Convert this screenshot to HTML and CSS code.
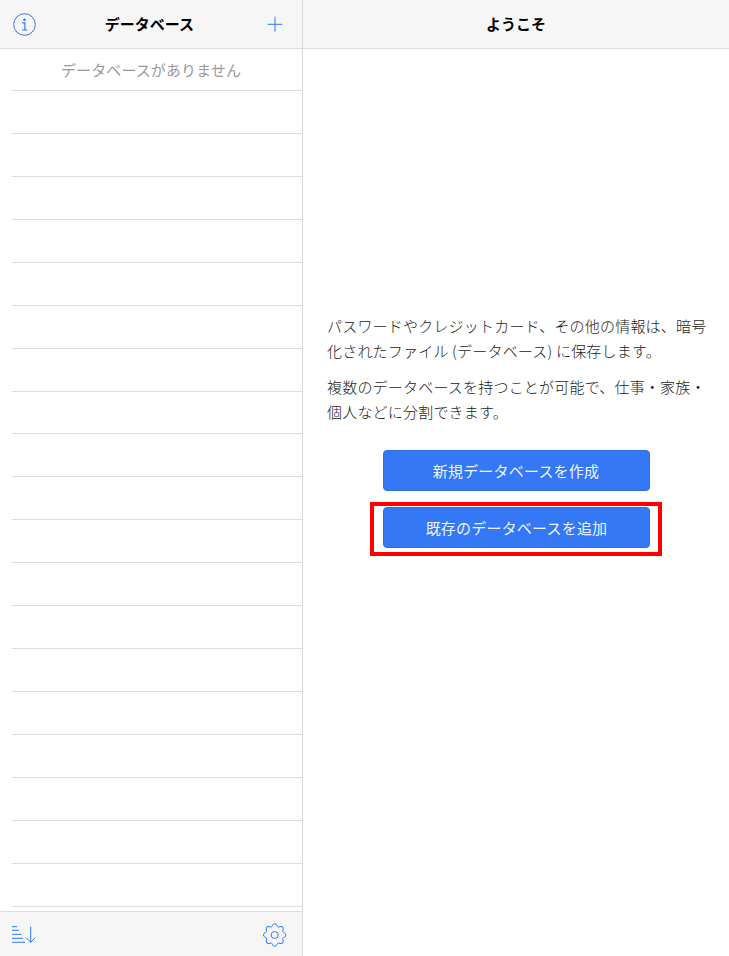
FILE: index.html
```html
<!DOCTYPE html>
<html lang="ja">
<head>
    <meta charset="UTF-8">
    <meta name="viewport" content="width=device-width, initial-scale=1.0">
    <title>データベース</title>
    <link rel="stylesheet" href="styles.css">
</head>
<body>
    <div class="app">
        <!-- database list -->
        <div class="sidebar">
            <div class="navbar navbar-split">
                <svg class="icon" width="24" height="24" viewBox="0 0 24 24">
                    <circle cx="12.500" cy="12.500" r="10.800"/>
                    <circle class="dot" cx="12.500" cy="7.800" r="1.300"/>
                    <path class="thick" d="M10.300 10.800h2.600v7M10 18h5.400"/>
                </svg>
                <span class="navbar-title">データベース</span>
                <svg class="icon" width="24" height="24" viewBox="0 0 24 24">
                    <path d="M12 4.700v15M4.700 12.300h14.600"/>
                </svg>
            </div>
            <ul class="db-list">
                <li class="db-empty">データベースがありません</li>
                <li></li><li></li><li></li><li></li><li></li>
                <li></li><li></li><li></li><li></li><li></li>
                <li></li><li></li><li></li><li></li><li></li>
                <li></li><li></li><li></li><li></li>
            </ul>
            <div class="toolbar">
                <svg class="icon" width="26" height="20" viewBox="0 0 26 20">
                    <path d="M0 2.700h5M0 6.300h7M0 10.300h9.500M0 14.300h11M0 18.300h13"/>
                    <path d="M18.700 2.700v15.600M14.200 13.700l4.500 4.600 4.500-4.600"/>
                </svg>
                <svg class="icon icon-gear" width="24" height="24" viewBox="0 0 24 24">
                    <defs>
                        <path id="gear-lobe" d="M8.670 3.960C9.900 3.400 9.600 .8 12 .8S14.100 3.400 15.330 3.960"/>
                    </defs>
                    <g transform="translate(-.3 1)">
                        <circle cx="12" cy="12" r="3.500"/>
                        <use href="#gear-lobe"/>
                        <use href="#gear-lobe" transform="rotate(45 12 12)"/>
                        <use href="#gear-lobe" transform="rotate(90 12 12)"/>
                        <use href="#gear-lobe" transform="rotate(135 12 12)"/>
                        <use href="#gear-lobe" transform="rotate(180 12 12)"/>
                        <use href="#gear-lobe" transform="rotate(225 12 12)"/>
                        <use href="#gear-lobe" transform="rotate(270 12 12)"/>
                        <use href="#gear-lobe" transform="rotate(315 12 12)"/>
                    </g>
                </svg>
            </div>
        </div>

        <!-- welcome -->
        <div class="main">
            <div class="navbar">
                <span class="navbar-title">ようこそ</span>
            </div>
            <div class="welcome">
                <p>パスワードやクレジットカード、その他の情報は、暗号化されたファイル (データベース) に保存します。</p>
                <p>複数のデータベースを持つことが可能で、仕事・家族・個人などに分割できます。</p>
                <div class="actions">
                    <button class="btn">新規データベースを作成</button>
                    <div class="highlight">
                        <button class="btn">既存のデータベースを追加</button>
                    </div>
                </div>
            </div>
        </div>
    </div>
</body>
</html>
```

FILE: styles.css
```css
body {
    margin: 0;
    font-family: "Noto Sans CJK JP", "Noto Sans", sans-serif;
    background-color: white;
    color: #222;
    overflow: hidden;
}

.app {
    display: flex;
    height: 956px;
}

/* sidebar */
.sidebar {
    width: 302px;
    display: flex;
    flex-direction: column;
    border-right: 1px solid #d9d9d9;
}

.navbar {
    height: 48px;
    flex-shrink: 0;
    display: flex;
    align-items: center;
    justify-content: center;
    background-color: #f6f6f6;
    border-bottom: 1px solid #dedede;
}

.navbar-split {
    justify-content: space-between;
    padding: 0 15px 0 12px;
}

.navbar-title {
    font-size: 15px;
    font-weight: 700;
    line-height: 47px;
    height: 48px;
    color: #000;
}

.icon {
    fill: none;
    stroke: #3478f6;
    stroke-width: 1;
}

.icon .dot {
    fill: #3478f6;
    stroke: none;
}

.icon .thick {
    stroke-width: 1.2;
}

.icon-gear {
    overflow: visible;
}

.db-list {
    list-style-type: none;
    margin: 0;
    padding: 0 0 0 12px;
    flex: 1;
    overflow: hidden;
}

.db-list li {
    height: 41.95px;
    border-bottom: 1px solid #dedede;
}

.db-list .db-empty {
    margin-left: -12px;
    text-align: center;
    font-size: 15px;
    line-height: 41px;
    letter-spacing: 0.1px;
    color: #9a9a9a;
    border-bottom: none;
    box-shadow: 12px 0 0 -12px #dedede;
    background: linear-gradient(#dedede, #dedede) 12px 100% / 100% 1px no-repeat;
}

.toolbar {
    height: 44px;
    flex-shrink: 0;
    display: flex;
    align-items: center;
    justify-content: space-between;
    padding: 0 15px 0 12px;
    background-color: #f6f6f6;
    border-top: 1px solid #dedede;
}

/* main */
.main {
    flex: 1;
    display: flex;
    flex-direction: column;
}

.welcome {
    padding: 264px 16px 0 24px;
}

.welcome p {
    margin: 0 0 11px;
    font-size: 15px;
    line-height: 25px;
    letter-spacing: 0.2px;
    font-weight: 300;
}

.actions {
    display: flex;
    flex-direction: column;
    align-items: center;
    margin: 26px 0 0 -8px;
}

.btn {
    width: 267px;
    height: 41px;
    padding: 0;
    font-family: inherit;
    font-size: 15px;
    letter-spacing: 0.2px;
    color: #eef4ff;
    background-color: #3478f6;
    border: 1px solid #2f6fe4;
    border-radius: 4px;
}

.highlight {
    margin-top: 11px;
    padding: 1px 8px 4px 9px;
    border: 4px solid #f00;
    display: flex;
}
```
